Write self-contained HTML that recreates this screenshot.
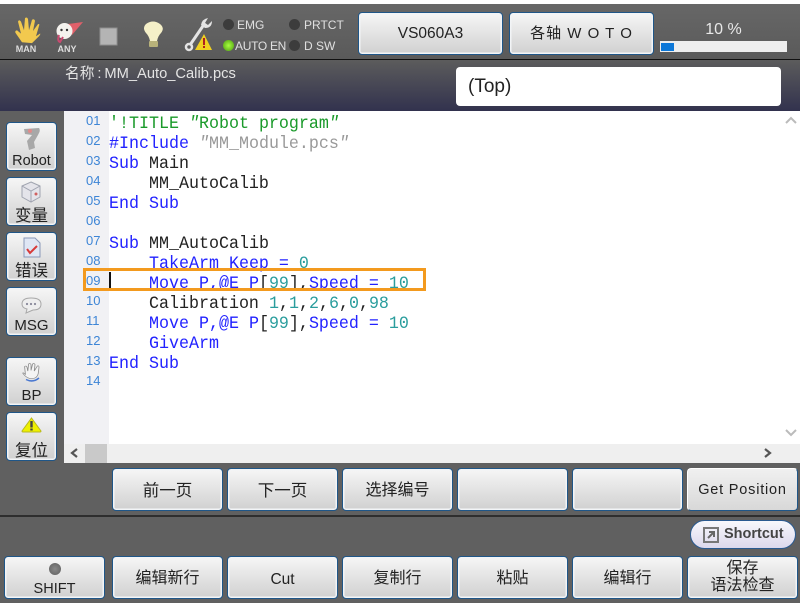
<!DOCTYPE html>
<html><head><meta charset="utf-8">
<style>
html,body{margin:0;padding:0;background:#fff}
body{width:809px;height:606px;position:relative;overflow:hidden;font-family:"Liberation Sans","Noto Sans CJK SC",sans-serif;color:#222}
.a{position:absolute}
.b{position:absolute;box-sizing:border-box;border:1.5px solid #1f5688;border-radius:4px;background:linear-gradient(#f6f6f6,#d0d0d0);box-shadow:inset 0 0 0 1.5px #f2f4f6;text-align:center;color:#222;font-size:16px}
.c{position:absolute;left:109px;font:16.67px/20px "Liberation Mono",monospace;white-space:pre;height:20px;transform:scaleY(1.05);color:#222}
.n{position:absolute;left:86px;width:18px;font-size:13px;line-height:20px;color:#3d85d6;text-align:left}
.k{color:#2222ff}.g{color:#1a9a2a}.y{color:#999}.t{color:#2a9d9d}
.q{font-style:italic}
.led{position:absolute;width:11px;height:11px;border-radius:50%;background:#3c3c3c}
.l{position:absolute;font-size:12px;color:#e0e0e0;line-height:14px;white-space:nowrap}
</style></head><body>
<div class="a" style="left:0;top:4px;width:800px;height:599px;background:#606060"></div>
<div class="a" style="left:0;top:4px;width:800px;height:55px;background:linear-gradient(#676767,#5a5a5a)"></div>
<div class="a" style="left:0;top:59px;width:800px;height:1.5px;background:#111"></div>
<div class="a" style="left:0;top:60px;width:800px;height:51px;background:linear-gradient(#5c5c5c,#32324e)"></div>

<!-- top icons -->
<svg class="a" style="left:0;top:8px" width="220" height="52" viewBox="0 0 220 52">
<path transform="translate(0,5) scale(1,.86)" d="M22 34 L16 24 Q14 21 17 20 L21 24 L18 10 Q19 7 21 10 L24 20 L25 6 Q27 4 28 7 L29 20 L32 8 Q34 6 35 9 L33 21 L38 13 Q40 12 39 15 L36 27 L40 24 Q41 24 39 27 L32 35 Z" fill="#f2c94e"/>
<text x="26" y="44" font-size="9" font-weight="bold" fill="#ddd" text-anchor="middle" font-family="Liberation Sans">MAN</text>
<path d="M68 16 L83 14 L72 27 Z" fill="#e0606a"/>
<circle cx="64.5" cy="23" r="8" fill="#f4f2ee"/>
<circle cx="61.5" cy="22" r="1.2" fill="#333"/><circle cx="67" cy="22" r="1.2" fill="#333"/>
<path d="M59 27 Q57 33 60 34 L63 29" fill="none" stroke="#c84a70" stroke-width="2"/>
<text x="67" y="44" font-size="9" font-weight="bold" fill="#ddd" text-anchor="middle" font-family="Liberation Sans">ANY</text>
<rect x="100" y="20" width="17" height="17" fill="#b4b4b4" stroke="#8f8f8f"/>
<path d="M150 33 Q149 28 146 25 Q142 20 146 16 Q153 11 160 16 Q165 20 161 25 Q158 28 157 33 Z" fill="#f5f0c8"/>
<rect x="149" y="33" width="9" height="6" rx="1" fill="#b8b27a"/>
<path d="M190 37 L205 15" stroke="#e4e4e4" stroke-width="3" fill="none"/>
<path d="M201 17 Q202 11 208 10 L205 15 L208 17 L212 13 Q212 20 205 20" fill="#e4e4e4"/>
<circle cx="189" cy="39" r="3" fill="none" stroke="#e4e4e4" stroke-width="2.5"/>
<path d="M204 26 L212 42 L195 42 Z" fill="#f0d020"/><rect x="203" y="30" width="2" height="7" fill="#b02020"/><rect x="203" y="38" width="2" height="2" fill="#b02020"/>
</svg>

<div class="led" style="left:223px;top:19px"></div><div class="l" style="left:237px;top:18px">EMG</div>
<div class="led" style="left:289px;top:19px"></div><div class="l" style="left:304px;top:18px">PRTCT</div>
<div class="led" style="left:223px;top:40px;background:radial-gradient(#a8ff40,#4a9a10)"></div><div class="l" style="left:235px;top:39px;letter-spacing:-.3px">AUTO EN</div>
<div class="led" style="left:289px;top:40px"></div><div class="l" style="left:304px;top:39px">D SW</div>

<div class="b" style="left:358px;top:12px;width:145px;height:43px;line-height:41px;font-size:15.5px">VS060A3</div>
<div class="b" style="left:509px;top:12px;width:145px;height:43px;line-height:41px;font-size:15px;letter-spacing:1px">各轴 W O T O</div>
<div class="a" style="left:660px;top:21px;width:127px;text-align:center;color:#e8e8e8;font-size:16px;line-height:18px">10 %</div>
<div class="a" style="left:660px;top:41px;width:127px;height:11px;background:#eee"></div>
<div class="a" style="left:661px;top:43px;width:13px;height:8px;background:#0d78d8"></div>

<div class="a" style="left:65px;top:64px;color:#e4e4e4;font-size:14.7px;line-height:20px;white-space:nowrap">名称<span style="display:inline-block;width:10px;text-align:center">:</span>MM_Auto_Calib.pcs</div>
<div class="a" style="left:456px;top:67px;width:325px;height:39px;background:#fff;border-radius:4px;color:#222;font-size:19px;line-height:40px;text-indent:12px">(Top)</div>

<!-- editor -->
<div class="a" style="left:64px;top:111px;width:736px;height:352px;background:#fff"></div>
<div class="a" style="left:64px;top:111px;width:45px;height:333px;background:#f1f1f4"></div>
<div class="a" style="left:64px;top:444px;width:736px;height:19px;background:#efefef"></div>
<div class="a" style="left:781px;top:111px;width:19px;height:333px;background:#fff"></div>
<div class="a" style="left:85px;top:444px;width:22px;height:19px;background:#c9c9c9"></div>
<svg class="a" style="left:64px;top:111px" width="736" height="352" viewBox="0 0 736 352" fill="none">
<path d="M13 338 L8 342 L13 346" stroke="#555" stroke-width="2.2"/>
<path d="M701 338 L706 342 L701 346" stroke="#555" stroke-width="2.2"/>
<path d="M722 12 L727 7 L732 12" stroke="#bbb" stroke-width="2"/>
<path d="M722 319 L727 324 L732 319" stroke="#bbb" stroke-width="2"/>
</svg>

<div class="n" style="top:111px">01</div><div class="n" style="top:131px">02</div><div class="n" style="top:151px">03</div><div class="n" style="top:171px">04</div><div class="n" style="top:191px">05</div><div class="n" style="top:211px">06</div><div class="n" style="top:231px">07</div><div class="n" style="top:251px">08</div><div class="n" style="top:271px">09</div><div class="n" style="top:291px">10</div><div class="n" style="top:311px">11</div><div class="n" style="top:331px">12</div><div class="n" style="top:351px">13</div><div class="n" style="top:371px">14</div>

<div class="c g" style="top:115px">'!TITLE <span class="q">"</span>Robot program<span class="q">"</span></div>
<div class="c" style="top:135px"><span class="k">#Include</span> <span class="y"><span class="q">"</span>MM_Module.pcs<span class="q">"</span></span></div>
<div class="c" style="top:155px"><span class="k">Sub</span> Main</div>
<div class="c" style="top:175px">    MM_AutoCalib</div>
<div class="c k" style="top:195px">End Sub</div>
<div class="c" style="top:235px"><span class="k">Sub</span> MM_AutoCalib</div>
<div class="c" style="top:255px">    <span class="k">TakeArm Keep =</span> <span class="t">0</span></div>
<div class="c" style="top:275px">    <span class="k">Move P,@E P</span>[<span class="t">99</span>],<span class="k">Speed =</span> <span class="t">10</span></div>
<div class="a" style="left:83px;top:288px;width:342px;height:6px;background:#fff"></div>
<div class="a" style="left:83px;top:288px;width:26px;height:6px;background:#f1f1f4"></div>
<div class="c" style="top:295px">    Calibration <span class="t">1</span>,<span class="t">1</span>,<span class="t">2</span>,<span class="t">6</span>,<span class="t">0</span>,<span class="t">98</span></div>
<div class="c" style="top:315px">    <span class="k">Move P,@E P</span>[<span class="t">99</span>],<span class="k">Speed =</span> <span class="t">10</span></div>
<div class="c k" style="top:335px">    GiveArm</div>
<div class="c k" style="top:355px">End Sub</div>
<div class="a" style="left:109px;top:272px;width:2px;height:16px;background:#111"></div>
<div class="a" style="left:83px;top:268px;width:343px;height:23px;box-sizing:border-box;border:3px solid #f39a1e"></div>

<!-- left buttons -->
<div class="b" style="left:6px;top:122px;width:51px;height:49px;font-size:14.5px;padding-top:28px;line-height:20px">Robot</div>
<div class="b" style="left:6px;top:177px;width:51px;height:49px;font-size:16.5px;padding-top:28px;line-height:20px">变量</div>
<div class="b" style="left:6px;top:232px;width:51px;height:49px;font-size:16.5px;padding-top:28px;line-height:20px">错误</div>
<div class="b" style="left:6px;top:287px;width:51px;height:49px;font-size:15px;padding-top:28px;line-height:20px">MSG</div>
<div class="b" style="left:6px;top:357px;width:51px;height:49px;font-size:15px;padding-top:28px;line-height:20px">BP</div>
<div class="b" style="left:6px;top:412px;width:51px;height:49px;font-size:16.5px;padding-top:28px;line-height:20px">复位</div>
<svg class="a" style="left:6px;top:122px" width="51" height="340" viewBox="0 0 51 340">
<path d="M18 7 L33 6 Q35 8 32 13 L28 20 L29 26 L23 28 L21 19 L26 13 L19 12 Z" fill="#a8a8a8"/><circle cx="24" cy="9" r="2" fill="#e08a8a"/>
<path d="M25 60 L34 64 L34 75 L25 80 L16 75 L16 64 Z" fill="#e4e4ea" stroke="#a0a4b0"/><path d="M16 64 L25 69 L34 64 M25 69 L25 80" stroke="#a0a4b0" fill="none"/><circle cx="30" cy="72" r="1.5" fill="#d06060"/>
<path d="M18 116 L29 116 L34 121 L34 135 L18 135 Z" fill="#dfe6f4" stroke="#8a98b8"/><path d="M21 127 L24 131 L31 124" stroke="#d83a3a" stroke-width="2" fill="none"/>
<path d="M25 176 Q35 176 35 182 Q35 188 27 188 L20 191 L21 187 Q16 186 16 182 Q16 176 25 176 Z" fill="#eee" stroke="#a8a8a8"/><circle cx="21" cy="182" r="1.1" fill="#889"/><circle cx="25" cy="182" r="1.1" fill="#889"/><circle cx="29" cy="182" r="1.1" fill="#889"/>
<path transform="translate(5,86.5) scale(.8,.64)" d="M18 259 L17 247 Q19 245 20 248 L21 254 L22 243 Q24 241 25 244 L25 253 L27 243 Q29 241 30 244 L29 254 L33 246 Q35 245 35 248 L34 258 Q33 265 26 266 Q20 266 15 258 Q14 255 18 259Z" fill="#f4f4f4" stroke="#8a8a8a"/><path d="M20 257.500 Q27 261 33 256" stroke="#4a78d0" stroke-width="1.5" fill="none"/>
<path d="M25.500 296 L35 309 Q35 310 34 310 L17 310 Q16 310 16 309 Z" fill="#eef000" stroke="#b8b820"/><rect x="24.300" y="299" width="2.400" height="6.500" fill="#444"/><rect x="24.300" y="306.500" width="2.400" height="2" fill="#444"/>
</svg>

<!-- bottom row 1 -->
<div class="b" style="left:112px;top:468px;width:111px;height:43px;line-height:44px;font-size:16.5px">前一页</div>
<div class="b" style="left:227px;top:468px;width:111px;height:43px;line-height:44px;font-size:16.5px">下一页</div>
<div class="b" style="left:342px;top:468px;width:111px;height:43px;line-height:44px">选择编号</div>
<div class="b" style="left:457px;top:468px;width:111px;height:43px"></div>
<div class="b" style="left:572px;top:468px;width:111px;height:43px"></div>
<div class="b" style="left:687px;top:468px;width:111px;height:43px;line-height:43px;font-size:14.5px;letter-spacing:.8px;white-space:nowrap;background:linear-gradient(#f0f0f0,#d8d8d8);border-color:#fff #1f5688 #1f5688 #fff;box-shadow:none">Get Position</div>
<div class="a" style="left:0;top:515px;width:800px;height:2px;background:#2e2e2e"></div>

<div class="a" style="left:690px;top:520px;width:106px;height:29px;box-sizing:border-box;border-radius:15px;border:1.5px solid #2a5a90;background:linear-gradient(#f8f8fc,#dcd8ec);color:#444;font-size:14.500px;font-weight:bold;line-height:27px;text-indent:33px;white-space:nowrap">Shortcut</div>
<svg class="a" style="left:703px;top:527px" width="17" height="16" viewBox="0 0 17 16" fill="none"><rect x="1" y="1" width="14" height="14" stroke="#777" stroke-width="2"/><path d="M5 11 L11 5 M6 5 H11 V10" stroke="#666" stroke-width="2"/></svg>

<!-- bottom row 2 -->
<div class="b" style="left:4px;top:556px;width:101px;height:43px;padding-top:22px;line-height:20px;font-size:14.5px">SHIFT</div>
<div class="a" style="left:49px;top:563px;width:12px;height:12px;border-radius:50%;background:radial-gradient(#888,#5e5e5e)"></div>
<div class="b" style="left:112px;top:556px;width:111px;height:43px;line-height:44px">编辑新行</div>
<div class="b" style="left:227px;top:556px;width:111px;height:43px;line-height:45px;font-size:15.5px">Cut</div>
<div class="b" style="left:342px;top:556px;width:111px;height:43px;line-height:44px">复制行</div>
<div class="b" style="left:457px;top:556px;width:111px;height:43px;line-height:44px">粘贴</div>
<div class="b" style="left:572px;top:556px;width:111px;height:43px;line-height:44px">编辑行</div>
<div class="b" style="left:687px;top:556px;width:111px;height:43px;line-height:17px;padding-top:3px">保存<br>语法检查</div>
</body></html>
